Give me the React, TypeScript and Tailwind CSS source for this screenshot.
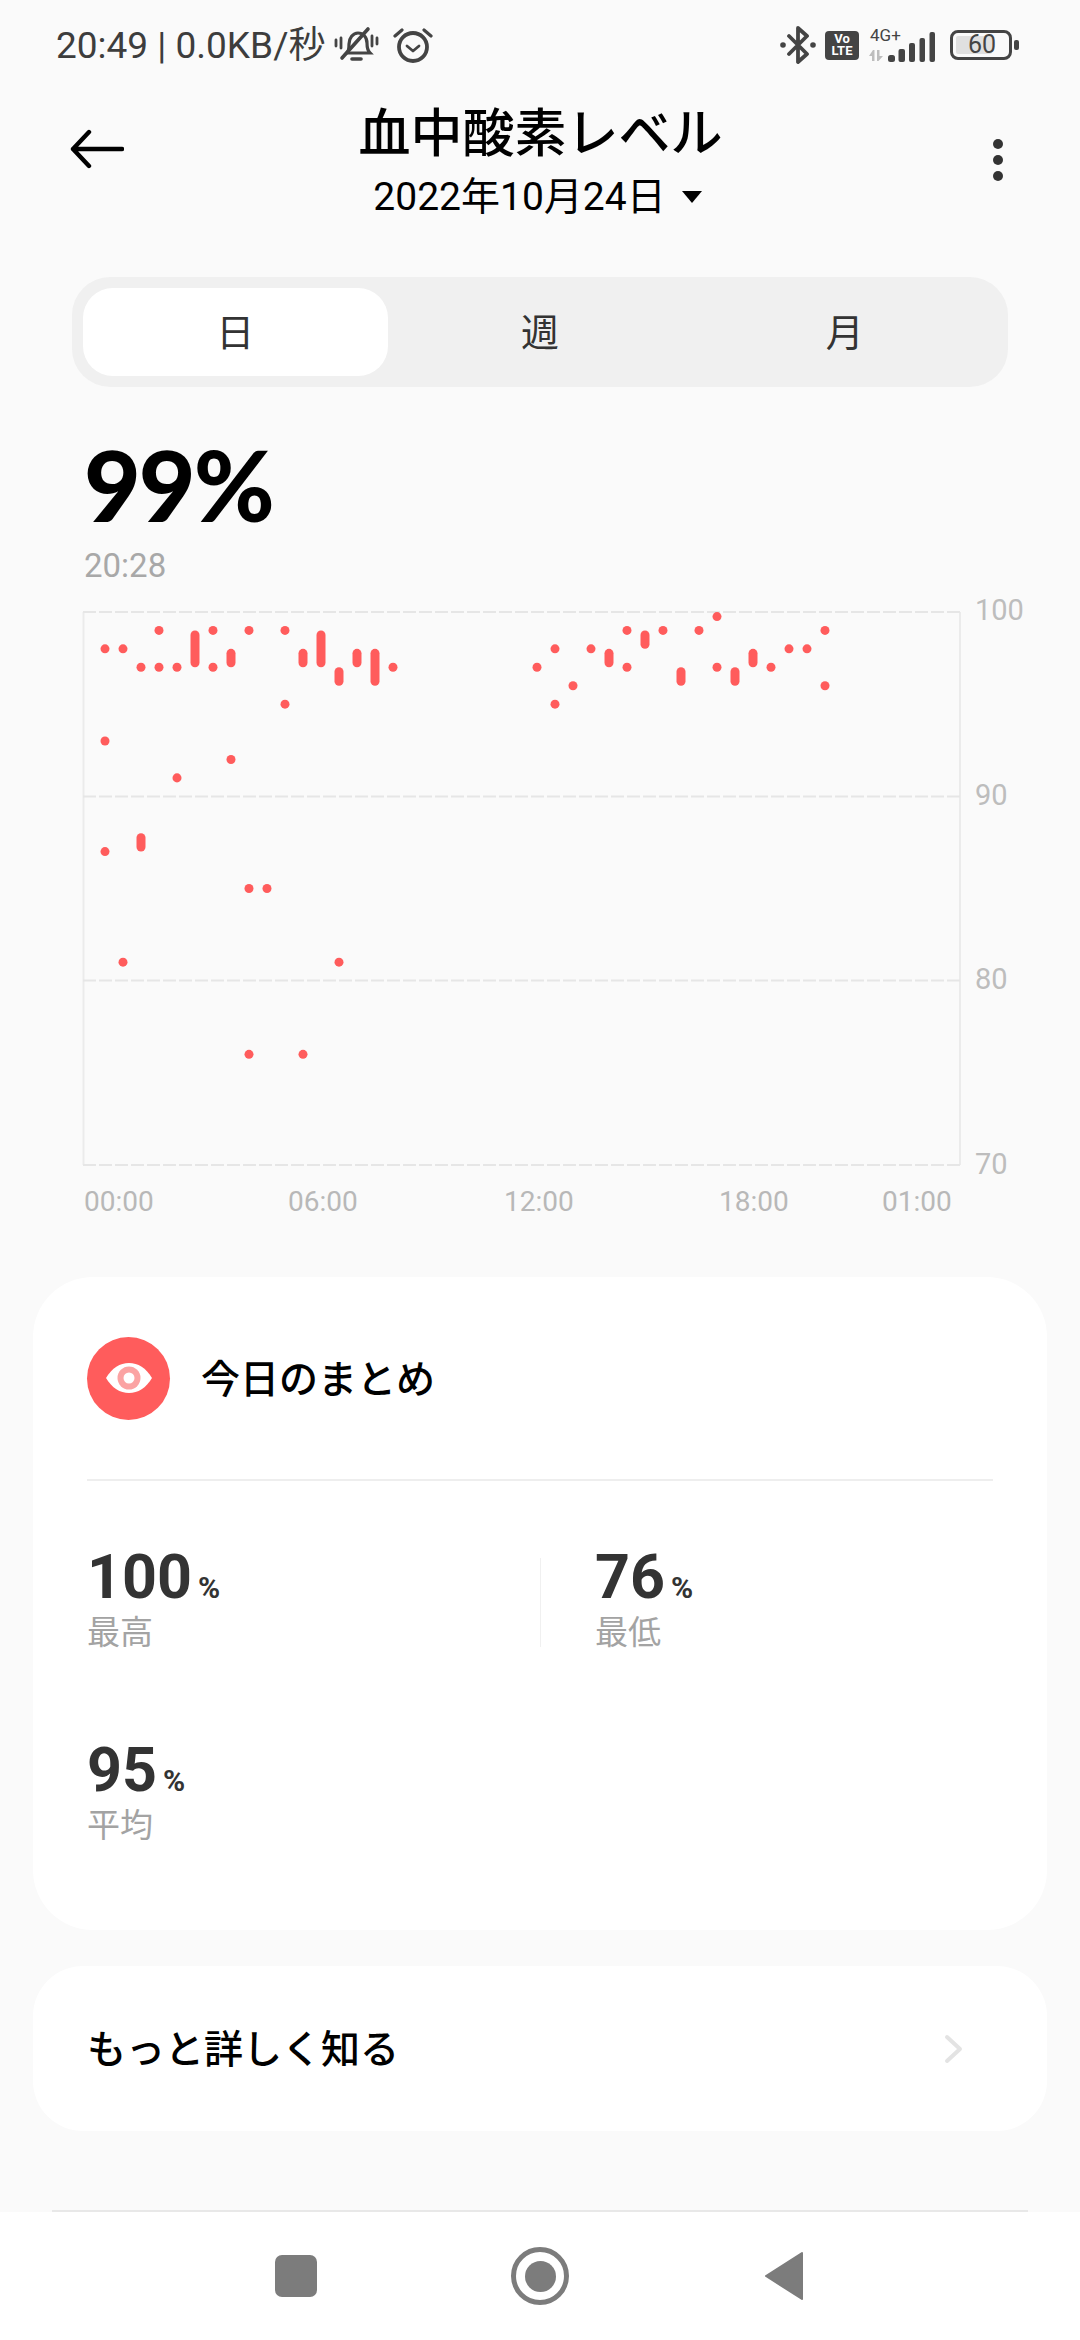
const dots: [number, number, number?][] = [
  [105, 98], [105, 93], [105, 87], [123, 98], [123, 81], [141, 97], [141, 88, 87], [159, 99], [159, 97],
  [177, 97], [177, 91], [195, 99, 97], [213, 99], [213, 97], [231, 98, 97], [231, 92], [249, 99], [249, 85], [249, 76],
  [267, 85], [285, 99], [285, 95], [303, 98, 97], [303, 76], [321, 99, 97], [339, 97, 96], [339, 81], [357, 98, 97],
  [375, 98, 96], [393, 97], [537, 97], [555, 98], [555, 95], [573, 96], [591, 98], [609, 98, 97], [627, 99], [627, 97],
  [645, 99, 98], [663, 99], [681, 97, 96], [699, 99], [717, 99.75], [717, 97], [735, 97, 96], [753, 98, 97], [771, 97],
  [789, 98], [807, 98], [825, 99], [825, 96],
];

const yOf = (v: number) => 2 + (100 - v) * 18.43;

function Chart() {
  return (
    <svg width="880" height="560" viewBox="0 0 880 560" className="block shrink-0">
      <line x1="1.5" y1="2" x2="1.5" y2="555" stroke="#ebebeb" strokeWidth="2" />
      <line x1="878" y1="2" x2="878" y2="555" stroke="#ebebeb" strokeWidth="2" />
      {[2, 186.5, 370.5, 555].map((y) => (
        <line key={y} x1="1" y1={y} x2="878" y2={y} stroke="#e6e6e6" strokeWidth="2" strokeDasharray="13 3" />
      ))}
      {dots.map(([x, a, b], i) => (
        <line
          key={i}
          x1={x - 82}
          y1={b === undefined ? yOf(a) : yOf(a) + 4.5}
          x2={x - 82}
          y2={b === undefined ? yOf(a) + 0.01 : yOf(b) - 4.5}
          stroke="#ff5c5c"
          strokeWidth="9"
          strokeLinecap="round"
        />
      ))}
    </svg>
  );
}

function StatusLeftIcons() {
  return (
    <div className="flex items-center ml-[9px] gap-[14px]">
      <svg width="45" height="38" viewBox="0 0 45 38" fill="none" stroke="#444" strokeWidth="3.6" strokeLinecap="round">
        <path d="M13 27c2-2 2-5 2-9 0-6 4-11 9-11s9 4 9 10c0 4 0 7 3 10H13z" strokeWidth="3.2" />
        <path d="M18 33h9" />
        <path d="M8 32 34 3" stroke="#444" />
        <path d="M7 12v10M2 14v6M38 10v10M43 12v6" strokeWidth="2.8" />
      </svg>
      <svg width="40" height="36" viewBox="0 0 40 36" fill="none" stroke="#444" strokeLinecap="round" strokeLinejoin="round">
        <circle cx="20" cy="20" r="14" strokeWidth="3.8" />
        <path d="M14 19l6 5 6-5" strokeWidth="2.8" />
        <path d="M2 9l7-6M38 9l-7-6" strokeWidth="3.2" />
      </svg>
    </div>
  );
}

function StatusRightIcons() {
  return (
    <div className="flex items-center">
      <svg width="36" height="38" viewBox="0 0 36 38" fill="none" stroke="#444" strokeWidth="3.8" strokeLinejoin="round" strokeLinecap="round" className="mr-[9px]">
        <path d="M9 10l18 18-9 8V2l9 8L9 28" />
        <circle cx="3" cy="19" r="2.8" fill="#444" stroke="none" />
        <circle cx="33" cy="19" r="2.8" fill="#444" stroke="none" />
      </svg>
      <div className="w-[34px] h-[29px] rounded-[4px] bg-[#444] text-white text-[13px] leading-[12px] font-bold flex flex-col items-center justify-center mr-[9px] font-['Roboto',sans-serif]">
        <span>Vo</span>
        <span>LTE</span>
      </div>
      <div className="relative w-[68px] h-[34px] mr-[14px]">
        <span className="absolute left-[2px] -top-[3px] text-[17px] leading-[20px] text-[#444] font-['Roboto',sans-serif]">4G+</span>
        <svg width="68" height="34" viewBox="0 0 68 34" className="block">
          <path d="M1 28l4-6h1.500v11H4v-5zM9 22h2.500v6H15l-4.500 5H9z" fill="#bdbdbd" />
          <rect x="20" y="27" width="7" height="7" rx="2.500" fill="#444" />
          <rect x="30.500" y="21" width="6.500" height="13" rx="2" fill="#444" />
          <rect x="41" y="15" width="6" height="19" rx="2" fill="#444" />
          <rect x="51.500" y="10" width="5.500" height="24" rx="2" fill="#444" />
          <rect x="61.500" y="4" width="5.500" height="30" rx="2" fill="#444" />
        </svg>
      </div>
      <div className="relative w-[62px] h-[30px] rounded-[8px] border-[3px] border-[#444] flex items-center">
        <div className="absolute left-[3px] top-[3px] bottom-[3px] w-[36px] rounded-[2px] bg-[#e0e0e0]" />
        <span className="relative ml-[15px] text-[25px] leading-[24px] text-[#444] font-['Roboto',sans-serif]">60</span>
      </div>
      <div className="w-[5px] h-[10px] ml-[2px] rounded-[2px] bg-[#444]" />
    </div>
  );
}

function Stat({ value, label, divider }: { value: string; label: string; divider?: boolean }) {
  return (
    <div className={divider ? "relative pl-[55px]" : ""}>
      {divider && <div className="absolute left-0 top-[12px] w-px h-[89px] bg-[#f0f0f0]" />}
      <div className="flex items-baseline h-[65px] text-[#333] font-['Roboto',sans-serif]">
        <span className="text-[61px] leading-[62px] font-bold">{value}</span>
        <span className="text-[30px] leading-[30px] font-bold ml-[6px]">%</span>
      </div>
      <div className="text-[33px] leading-[44px] text-[#a3a3a3]">{label}</div>
    </div>
  );
}

export default function App() {
  return (
    <div className="w-[1080px] h-[2340px] bg-[#fafafa] flex flex-col overflow-hidden font-['Roboto','Noto_Sans_CJK_JP',sans-serif]">
      <div className="h-[90px] shrink-0 flex items-center justify-between pl-[56px] pr-[61px]">
        <div className="flex items-center">
          <span className="text-[37px] leading-[40px] text-[#3d3d3d] pt-[1px] font-['Roboto','Noto_Sans_CJK_JP',sans-serif]">20:49 | 0.0KB/秒</span>
          <StatusLeftIcons />
        </div>
        <StatusRightIcons />
      </div>

      <div className="h-[187px] shrink-0 flex items-start justify-between pl-[70px] pr-[55px]">
        <svg width="54" height="40" viewBox="0 0 54 40" fill="none" stroke="#000" strokeWidth="4.4" strokeLinecap="round" strokeLinejoin="round" className="mt-[39px]">
          <path d="M52 20H3M19 3 3 20l16 17" />
        </svg>
        <div className="flex flex-col items-center mr-[14px]">
          <div className="text-[52px] leading-[60px] font-medium text-black mt-[10px] font-['Noto_Sans_CJK_JP',sans-serif]">血中酸素レベル</div>
          <div className="flex items-center h-[54px] mt-[10px] pr-[6px]">
            <span className="text-[39px] leading-[48px] text-black">2022年10月24日</span>
            <svg width="20" height="12" viewBox="0 0 20 12" className="ml-[16px]">
              <path d="M0 0h20L10 12z" fill="#000" />
            </svg>
          </div>
        </div>
        <div className="w-[54px] flex flex-col items-end gap-[6px] mt-[49px] pr-[22px]">
          <div className="w-[10px] h-[10px] rounded-full bg-[#333]" />
          <div className="w-[10px] h-[10px] rounded-full bg-[#333]" />
          <div className="w-[10px] h-[10px] rounded-full bg-[#333]" />
        </div>
      </div>

      <div className="mx-[72px] h-[110px] shrink-0 rounded-[38px] bg-[#f0f0f0] p-[11px] grid grid-cols-3 text-[38px] text-[#333]">
        <div className="rounded-[30px] bg-white flex items-center justify-center pt-[3px]">日</div>
        <div className="flex items-center justify-center pt-[3px]">週</div>
        <div className="flex items-center justify-center pt-[3px]">月</div>
      </div>

      <div className="ml-[84px] mt-[47px] h-[102px] text-[98px] leading-[100px] font-black tracking-[-2px] text-black font-['Lato',sans-serif]">99%</div>
      <div className="ml-[84px] mt-[10px] text-[33px] leading-[40px] text-[#a8a8a8]">20:28</div>

      <div className="flex ml-[82px] mt-[24px] h-[560px]">
        <Chart />
        <div className="ml-[13px] flex flex-col justify-between h-[586px] -mt-[16px] text-[29px] leading-[32px] text-[#bdbdbd]">
          <span>100</span>
          <span>90</span>
          <span>80</span>
          <span>70</span>
        </div>
      </div>

      <div className="flex h-[36px] mt-[14px] items-center text-[28px] leading-[36px] text-[#b8b8b8]">
        <span className="ml-[84px] w-[204px]">00:00</span>
        <span className="w-[216px]">06:00</span>
        <span className="w-[215px]">12:00</span>
        <span className="w-[163px]">18:00</span>
        <span>01:00</span>
      </div>

      <div className="mx-[33px] mt-[57px] h-[653px] shrink-0 rounded-[60px] bg-white px-[54px]">
        <div className="h-[204px] border-b-2 border-[#eeeeee] flex items-center">
          <div className="w-[83px] h-[83px] rounded-full bg-[#ff5c5c] flex items-center justify-center">
            <svg width="46" height="30" viewBox="0 0 46 30">
              <path d="M0 15C6 5 14 0 23 0s17 5 23 15c-6 10-14 15-23 15S6 25 0 15z" fill="#fff" />
              <circle cx="23" cy="15" r="11.5" fill="#fba3a3" />
              <circle cx="23" cy="15" r="5.5" fill="#fff" />
            </svg>
          </div>
          <span className="ml-[31px] pt-[4px] text-[39px] leading-[50px] text-black font-medium">今日のまとめ</span>
        </div>
        <div className="grid grid-cols-2 gap-y-[84px] pt-[65px]">
          <Stat value="100" label="最高" />
          <Stat value="76" label="最低" divider />
          <Stat value="95" label="平均" />
        </div>
      </div>

      <div className="mx-[33px] mt-[36px] h-[165px] shrink-0 rounded-[50px] bg-white pl-[54px] pr-[83px] flex items-center justify-between">
        <span className="text-[39px] leading-[50px] pt-[2px] text-black font-medium">もっと詳しく知る</span>
        <svg width="20" height="30" viewBox="0 0 20 30" fill="none" stroke="#e3e3e3" strokeWidth="4" strokeLinecap="round" strokeLinejoin="round">
          <path d="M3 3l13 12L3 27" />
        </svg>
      </div>

      <div className="mx-[52px] mt-[79px] h-[2px] shrink-0 bg-[#e8e8e8]" />
      <div className="flex-1 bg-white flex items-center">
        <div className="flex items-center w-full pl-[275px]">
          <div className="w-[42px] h-[42px] rounded-[7px] bg-[#7c7c7c]" />
          <div className="ml-[194px] w-[58px] h-[58px] rounded-full border-[5px] border-[#7c7c7c] flex items-center justify-center">
            <div className="w-[31px] h-[31px] rounded-full bg-[#7c7c7c]" />
          </div>
          <svg width="40" height="50" viewBox="0 0 40 50" className="ml-[195px]">
            <path d="M38 2 2 25l36 23z" fill="#7c7c7c" stroke="#7c7c7c" strokeWidth="2" strokeLinejoin="round" />
          </svg>
        </div>
      </div>
    </div>
  );
}
